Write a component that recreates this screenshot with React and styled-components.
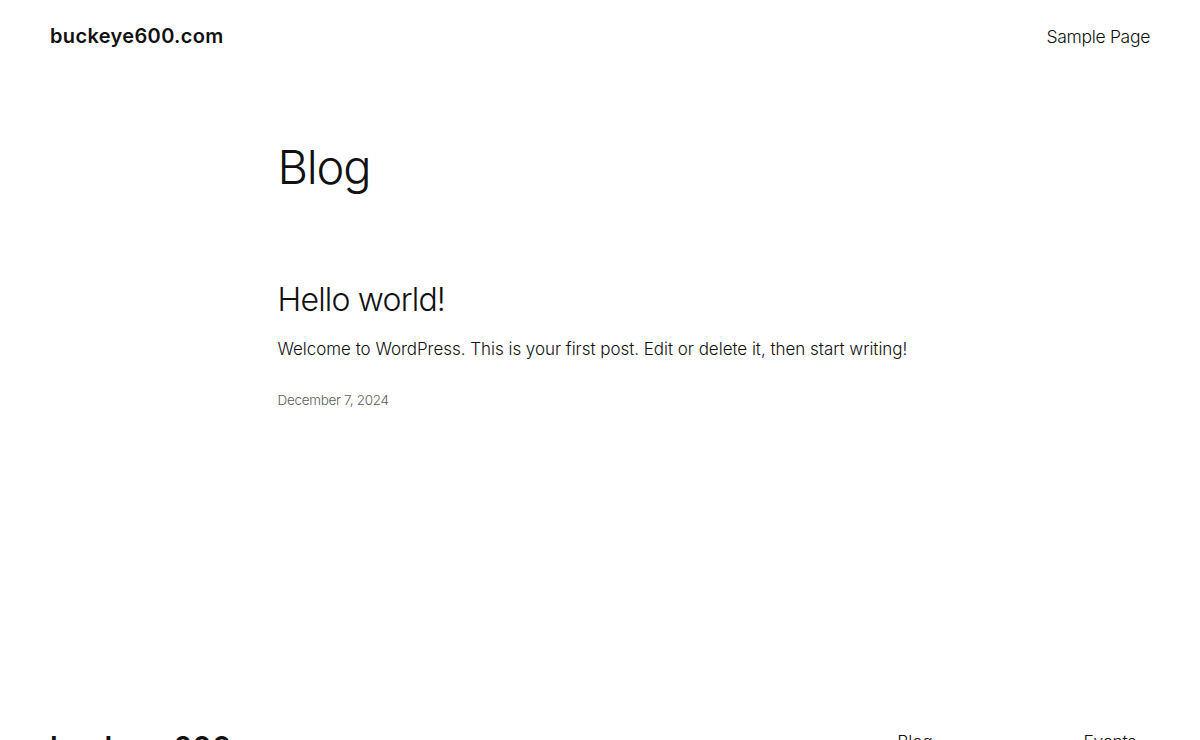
import React from 'react';
import styled, { createGlobalStyle } from 'styled-components';

const GlobalStyle = createGlobalStyle`
  html, body {
    margin: 0;
    padding: 0;
    background: #ffffff;
    color: #111111;
    font-family: Inter, 'Noto Sans', sans-serif;
  }
  * {
    box-sizing: border-box;
  }
`;

// Header
const SiteHeader = styled.header`
  display: flex;
  justify-content: space-between;
  align-items: center;
  height: 72px;
  padding: 0 50px;
`;

const SiteTitle = styled.a`
  font-size: 20px;
  font-weight: 600;
  letter-spacing: 0.35px;
  color: #111111;
  text-decoration: none;
`;

const NavLink = styled.a`
  font-size: 17.5px;
  font-weight: 300;
  letter-spacing: -0.3px;
  color: #111111;
  text-decoration: none;
`;

// Main content
const Main = styled.main`
  width: 645px;
  margin: 0 auto;
  padding-top: 67px;
  min-height: 628px;
`;

const PageTitle = styled.h1`
  margin: 0;
  font-size: 47px;
  font-weight: 300;
  letter-spacing: -1.2px;
  line-height: 1.2;
`;

const Post = styled.article`
  margin-top: 86px;
`;

const PostTitle = styled.h2`
  margin: 0;
  font-size: 32px;
  font-weight: 300;
  letter-spacing: -0.8px;
  line-height: 1.2;
`;

const Excerpt = styled.p`
  margin: 16px 0 0;
  font-size: 17px;
  font-weight: 300;
  letter-spacing: -0.03px;
  line-height: 1.6;
`;

const PostDate = styled.time`
  display: block;
  margin-top: 29px;
  font-size: 13.5px;
  font-weight: 300;
  letter-spacing: -0.3px;
  color: #5c5c5c;
`;

// Footer
const SiteFooter = styled.footer`
  display: flex;
  justify-content: space-between;
  align-items: flex-start;
  padding: 0 50px;
`;

const FooterTitle = styled.a`
  font-size: 29.5px;
  font-weight: 600;
  letter-spacing: 0.3px;
  line-height: 1.2;
  margin-top: 30px;
  color: #111111;
  text-decoration: none;
`;

const FooterNav = styled.nav`
  display: flex;
  gap: 151px;
  padding-right: 14px;
  margin-top: 31px;
`;

const App = () => {
  return (
    <>
      <GlobalStyle />
      <SiteHeader>
        <SiteTitle href="#">buckeye600.com</SiteTitle>
        <NavLink href="#">Sample Page</NavLink>
      </SiteHeader>

      <Main>
        <PageTitle>Blog</PageTitle>
        <Post>
          <PostTitle>Hello world!</PostTitle>
          <Excerpt>
            Welcome to WordPress. This is your first post. Edit or delete it, then start writing!
          </Excerpt>
          <PostDate>December 7, 2024</PostDate>
        </Post>
      </Main>

      <SiteFooter>
        <FooterTitle href="#">buckeye600.com</FooterTitle>
        <FooterNav>
          <NavLink href="#">Blog</NavLink>
          <NavLink href="#">Events</NavLink>
        </FooterNav>
      </SiteFooter>
    </>
  );
};

export default App;
